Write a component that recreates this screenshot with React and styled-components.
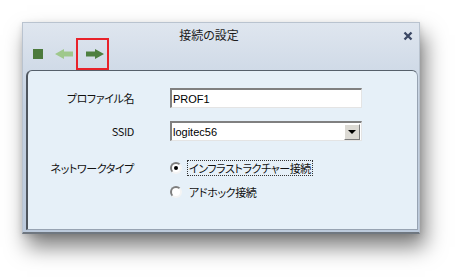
import React from "react";
import styled, { createGlobalStyle } from "styled-components";

const GlobalStyle = createGlobalStyle`
  html, body {
    margin: 0;
    padding: 0;
    background: #ffffff;
  }
  body {
    width: 463px;
    height: 279px;
    overflow: hidden;
    font-family: "Noto Sans CJK JP", "DejaVu Sans", sans-serif;
  }
`;

const Page = styled.div`
  padding: 22px 0 0 22px;
`;

const Window = styled.div`
  width: 396px;
  height: 209px;
  display: flex;
  flex-direction: column;
  background: linear-gradient(#dfe6ef 0%, #c4d1e1 40%, #bccadc 100%);
  border: 1px solid #b9c3cf;
  border-bottom: 2px solid #6f7780;
  box-shadow: 5px 13px 20px rgba(0, 0, 0, 0.5), 0 2px 6px rgba(0, 0, 0, 0.12);
`;

const TitleBar = styled.div`
  height: 47px;
  display: grid;
  grid-template-columns: 1fr auto 1fr;
`;

const Toolbar = styled.div`
  align-self: end;
  display: flex;
  align-items: center;
  padding-left: 10px;
`;

const StopIcon = styled.span`
  width: 10px;
  height: 10px;
  background: #4c7a3c;
  margin-right: 12px;
`;

const ArrowIcon = styled.svg`
  width: 18px;
  height: 10px;
  display: block;
`;

const ForwardButton = styled.div`
  width: 25px;
  height: 28px;
  border: 2px solid #e8222a;
  margin-left: 3px;
  display: flex;
  align-items: center;
  justify-content: center;
  padding-left: 4px;
  box-sizing: content-box;
`;

const Title = styled.div`
  align-self: start;
  padding: 4px 24px 0 0;
  font-size: 12px;
  line-height: 16px;
  color: #1c1c1c;
  font-feature-settings: "palt";
`;

const CloseButton = styled.div`
  justify-self: end;
  align-self: start;
  display: flex;
  padding: 8px 6px 0 0;
`;

const Panel = styled.div`
  flex: 1;
  margin: 0 1px 2px 3px;
  background: #e6f0f8;
  border: 1px solid #97a3b2;
  border-left: 2px solid #4f565e;
  border-top: 1px solid #56606b;
  border-radius: 6px 6px 0 0;
  padding-top: 17px;
`;

const Form = styled.div`
  display: grid;
  grid-template-columns: 106px 192px;
  column-gap: 36px;
  row-gap: 13px;
  font-size: 11px;
  letter-spacing: -0.4px;
  color: #111;
  font-feature-settings: "palt";
`;

const Label = styled.div`
  text-align: right;
  line-height: ${(p) => (p.$tall ? "16px" : "20px")};
  margin-top: ${(p) => (p.$tall ? "6px" : "0")};
  white-space: nowrap;
`;

const Field = styled.div`
  height: 20px;
  box-sizing: border-box;
  background: #ffffff;
  border-top: 2px solid #808080;
  border-left: 2px solid #808080;
  border-right: 1px solid #e4e4e4;
  border-bottom: 1px solid #e4e4e4;
  display: flex;
  align-items: center;
  justify-content: space-between;
  font-family: "Liberation Sans", Arial, sans-serif;
  font-size: 11px;
  letter-spacing: 0;
  padding-left: 1px;
  color: #000;
`;

const DropButton = styled.div`
  width: 16px;
  height: 16px;
  box-sizing: border-box;
  background: #dcdad4;
  border-top: 1px solid #ffffff;
  border-left: 1px solid #ffffff;
  border-right: 1px solid #7c7c7c;
  border-bottom: 1px solid #7c7c7c;
  display: flex;
  align-items: center;
  justify-content: center;
  margin-right: 1px;

  &::after {
    content: "";
    border-left: 4px solid transparent;
    border-right: 4px solid transparent;
    border-top: 4px solid #000;
  }
`;

const RadioGroup = styled.div`
  margin-top: 6px;
  display: flex;
  flex-direction: column;
  gap: 8px;
`;

const RadioRow = styled.div`
  display: flex;
  align-items: center;
  height: 16px;
`;

const RadioDot = styled.span`
  width: 12px;
  height: 12px;
  box-sizing: border-box;
  border-radius: 50%;
  border: 2px solid;
  border-color: #7e7e7e #f4f4f4 #f4f4f4 #7e7e7e;
  background: #ffffff;
  margin: 0 5px 0 0;
  display: flex;
  align-items: center;
  justify-content: center;

  &::after {
    content: "";
    width: 4px;
    height: 4px;
    border-radius: 50%;
    background: ${(p) => (p.$checked ? "#000" : "transparent")};
  }
`;

const RadioText = styled.span`
  line-height: 14px;
  padding: 0 1px;
  border: 1px ${(p) => (p.$focused ? "dotted #333" : "solid transparent")};
  white-space: nowrap;
`;

const Arrow = ({ left, color }) => (
  <ArrowIcon viewBox="0 0 18 10">
    <path
      d={
        left
          ? "M18 2.5 H9 V0 L0 5 L9 10 V7.5 H18 Z"
          : "M0 2.5 H9 V0 L18 5 L9 10 V7.5 H0 Z"
      }
      fill={color}
    />
  </ArrowIcon>
);

export default function App() {
  return (
    <>
      <GlobalStyle />
      <Page>
        <Window>
          <TitleBar>
            <Toolbar>
              <StopIcon />
              <Arrow left color="#9fc88c" />
              <ForwardButton>
                <Arrow color="#4e8040" />
              </ForwardButton>
            </Toolbar>
            <Title>接続の設定</Title>
            <CloseButton>
              <svg width="10" height="10" viewBox="0 0 10 10">
                <path d="M1.5 1.5 L8.5 8.5 M8.5 1.5 L1.5 8.5" stroke="#3b4864" strokeWidth="2.3" />
              </svg>
            </CloseButton>
          </TitleBar>
          <Panel>
            <Form>
              <Label>プロファイル名</Label>
              <Field>PROF1</Field>
              <Label>SSID</Label>
              <Field>
                logitec56
                <DropButton />
              </Field>
              <Label $tall>ネットワークタイプ</Label>
              <RadioGroup>
                <RadioRow>
                  <RadioDot $checked />
                  <RadioText $focused>インフラストラクチャー接続</RadioText>
                </RadioRow>
                <RadioRow>
                  <RadioDot />
                  <RadioText>アドホック接続</RadioText>
                </RadioRow>
              </RadioGroup>
            </Form>
          </Panel>
        </Window>
      </Page>
    </>
  );
}
